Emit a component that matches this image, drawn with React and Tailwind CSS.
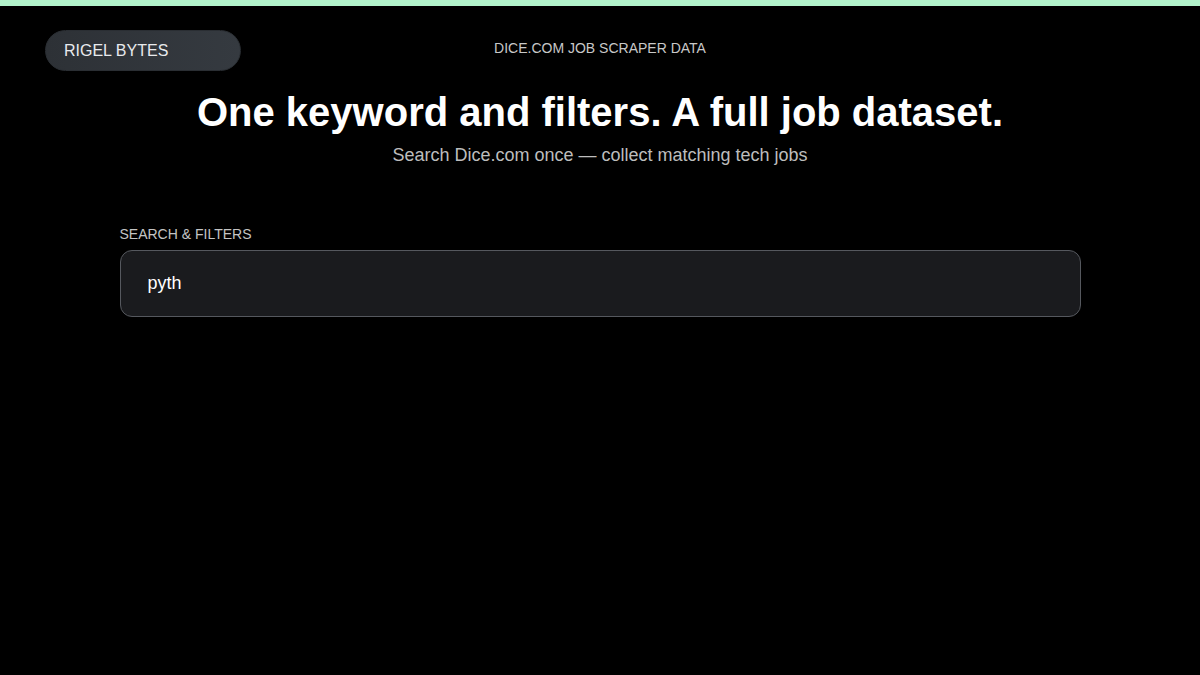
import React from "react";

const App = () => {
  return (
    <div
      className="w-full min-h-screen bg-black text-white"
      style={{ fontFamily: '"Liberation Sans", Arial, sans-serif' }}
    >
      {/* top accent */}
      <div className="h-[6px] w-full bg-[#b2f2cb]" />

      {/* header */}
      <header className="relative flex h-[66px] items-start justify-center px-[45px] pt-[34px]">
        <div className="absolute left-[45px] top-[24px] flex h-[41px] w-[196px] items-center rounded-full border border-[#2a2e33] bg-gradient-to-r from-[#2d3136] to-[#353a40] pl-[18px] text-[16px] text-[#e8eaed]">
          RIGEL BYTES
        </div>
        <div className="text-[14px] leading-[16px] text-[#c8c8c8]">
          DICE.COM JOB SCRAPER DATA
        </div>
      </header>

      {/* hero */}
      <section className="mt-[16px] flex flex-col items-center">
        <h1 className="text-[40px] font-bold leading-[48px] text-white">
          One keyword and filters. A full job dataset.
        </h1>
        <p className="mt-[7px] text-[18px] leading-[24px] text-[#bdbdbd]">
          Search Dice.com once — collect matching tech jobs
        </p>
      </section>

      {/* search */}
      <main className="mx-auto mt-[59px] w-[961px]">
        <div className="mb-[8px] text-[14px] leading-[16px] text-[#c4c4c4]">SEARCH &amp; FILTERS</div>
        <div className="flex h-[67px] items-center rounded-[12px] border border-[#55585e] bg-[#1a1b1e] px-[27px]">
          <input
            defaultValue="pyth"
            className="w-full bg-transparent text-[18px] text-white outline-none"
            style={{ fontFamily: '"Liberation Sans", Arial, sans-serif' }}
          />
        </div>
      </main>
    </div>
  );
};

export default App;
